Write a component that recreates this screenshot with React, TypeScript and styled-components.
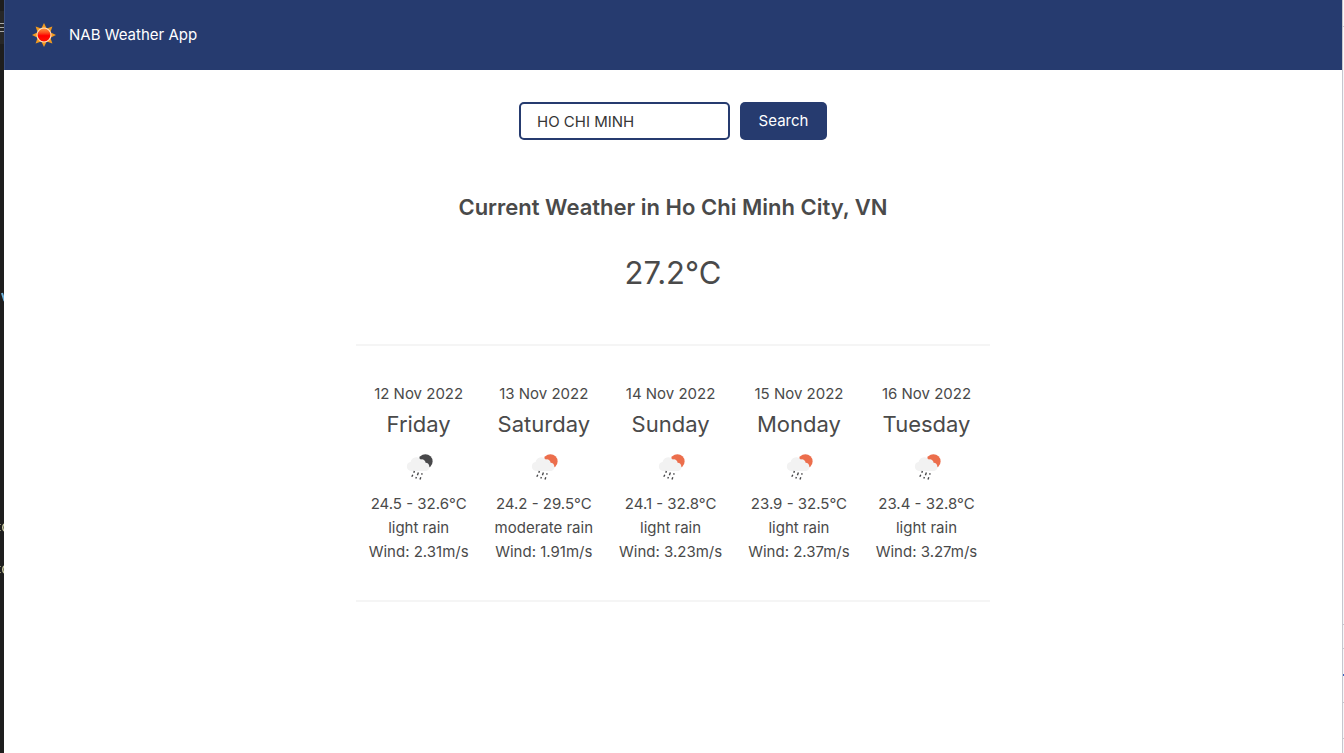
import React, { useState } from "react";
import styled, { createGlobalStyle } from "styled-components";

const NAVY = "#263b6f";

const GlobalStyle = createGlobalStyle`
  *, *::before, *::after { box-sizing: border-box; }
  body {
    margin: 0;
    background: #fff;
    color: #4a4a4a;
    font-family: Inter, "Liberation Sans", sans-serif;
    font-size: 15px;
    line-height: 24px;
  }
  h1, h2, p { margin: 0; font-weight: 400; }
`;

const Screen = styled.div`
  display: flex;
  min-height: 100vh;
`;

const EditorEdge = styled.div`
  flex: none;
  width: 4px;
  overflow: hidden;
  background: #1e1e1e;
  svg { display: block; }
`;

const PanelEdge = styled.div`
  flex: none;
  width: 2px;
  overflow: hidden;
  background: #f6f6f8;
  border-left: 1px solid #c6c6ce;
  svg { display: block; }
`;

const Page = styled.div`
  flex: 1;
  min-width: 0;
`;

const Header = styled.header`
  display: flex;
  align-items: center;
  gap: 13px;
  height: 70px;
  padding: 0 27px;
  border-left: 1px solid #3b4f80;
  background: ${NAVY};
  color: #fff;
`;

const AppName = styled.h1`
  font-size: 15px;
`;

const Main = styled.main`
  display: flex;
  flex-direction: column;
  align-items: center;
  padding: 32px 16px;
`;

const SearchForm = styled.form`
  display: flex;
  gap: 10px;
`;

const CityInput = styled.input`
  width: 211px;
  height: 38px;
  padding: 0 16px;
  border: 2px solid ${NAVY};
  border-radius: 5px;
  background: #fff;
  color: #363636;
  font: inherit;
  outline: none;
`;

const SearchButton = styled.button`
  width: 87px;
  height: 38px;
  padding: 0;
  border: 0;
  border-radius: 5px;
  background: ${NAVY};
  color: #fff;
  font: inherit;
  cursor: pointer;
`;

const Current = styled.section`
  display: flex;
  flex-direction: column;
  gap: 24px;
  padding: 49px 0 47px;
  text-align: center;
`;

const Title = styled.h2`
  font-size: 22px;
  line-height: 36px;
  font-weight: 600;
`;

const Temperature = styled.p`
  font-size: 31px;
  line-height: 48px;
`;

const Forecast = styled.section`
  display: flex;
  justify-content: center;
  padding: 36px 0;
  border-top: 2px solid #f5f5f5;
  border-bottom: 2px solid #f5f5f5;
`;

const Day = styled.article`
  display: flex;
  flex-direction: column;
  align-items: center;
  padding: 0 13px;
  white-space: nowrap;
`;

const DayName = styled.p`
  font-size: 22px;
  line-height: 36px;
`;

const SunLogo = () => (
  <svg width="24" height="24" viewBox="0 0 24 24" aria-hidden="true">
    <defs>
      <linearGradient id="sunFace" x1="0" y1="0" x2="0" y2="1">
        <stop offset="0" stopColor="#ff9a40" />
        <stop offset="0.35" stopColor="#fb4a1c" />
        <stop offset="0.55" stopColor="#ff0000" />
        <stop offset="1" stopColor="#fb1500" />
      </linearGradient>
    </defs>
    <path
      d="M12 0 L14.7 5.6 L20.4 3.6 L18.4 9.3 L24 12 L18.4 14.7 L20.4 20.4 L14.7 18.4 L12 24 L9.3 18.4 L3.6 20.4 L5.6 14.7 L0 12 L5.6 9.3 L3.6 3.6 L9.3 5.6 Z"
      fill="#f29a1f"
    />
    <circle cx="12" cy="12" r="7" fill="url(#sunFace)" stroke="#ffe0bd" strokeWidth="1.1" />
  </svg>
);

const RainIcon = ({ night }: { night?: boolean }) => (
  <svg width="50" height="50" viewBox="0 0 50 50" aria-hidden="true">
    <circle cx="31.4" cy="19.4" r="7.2" fill={night ? "#48484a" : "#ec6e4c"} />
    <path
      d="M17 29 A4.6 4.6 0 0 1 16.6 19.9 A5.8 5.8 0 0 1 26.8 17.6 A3.6 3.6 0 0 1 31.6 20.8 A4.2 4.2 0 0 1 32.4 29 Z"
      fill="#f2f2f2"
    />
    <g stroke="#48484a" strokeWidth="1.4">
      <path d="M20.4 29 L19.8 30.8 M24.4 30.6 L23.4 33.2 M28.2 31.2 L27.6 32.6 M18.8 32.8 L17.8 34.8 M22.4 35 L21.8 36.6 M26.8 35.2 L26 37.4" />
    </g>
  </svg>
);

interface DayForecast {
  date: string;
  name: string;
  range: string;
  summary: string;
  wind: string;
  night?: boolean;
}

const DAYS: DayForecast[] = [
  { date: "12 Nov 2022", name: "Friday", range: "24.5 - 32.6°C", summary: "light rain", wind: "2.31", night: true },
  { date: "13 Nov 2022", name: "Saturday", range: "24.2 - 29.5°C", summary: "moderate rain", wind: "1.91" },
  { date: "14 Nov 2022", name: "Sunday", range: "24.1 - 32.8°C", summary: "light rain", wind: "3.23" },
  { date: "15 Nov 2022", name: "Monday", range: "23.9 - 32.5°C", summary: "light rain", wind: "2.37" },
  { date: "16 Nov 2022", name: "Tuesday", range: "23.4 - 32.8°C", summary: "light rain", wind: "3.27" },
];

export default function App() {
  const [city, setCity] = useState("HO CHI MINH");

  return (
    <Screen>
      <GlobalStyle />
      <EditorEdge>
        <svg width="4" height="600" viewBox="0 0 4 600" aria-hidden="true">
          <rect y="11" width="4" height="33" fill="#272727" />
          <path d="M0 23.5h4M0 27.5h4M0 31.5h4" stroke="#a8a8a8" />
          <path d="M2 293 L4.500 301" stroke="#6fb3dd" strokeWidth="2" />
          <path d="M4 524 Q1.5 527.500 4 531 M4 566 Q1.5 569.500 4 573" stroke="#c9c9a2" strokeWidth="1.5" fill="none" />
          <path d="M0 524.500h1M0 530.500h1M0 566.500h1M0 572.500h1" stroke="#8f8f74" />
        </svg>
      </EditorEdge>
      <Page>
        <Header>
          <SunLogo />
          <AppName>NAB Weather App</AppName>
        </Header>
        <Main>
          <SearchForm onSubmit={(e) => e.preventDefault()}>
            <CityInput aria-label="City" value={city} onChange={(e) => setCity(e.target.value)} />
            <SearchButton type="submit">Search</SearchButton>
          </SearchForm>
          <Current>
            <Title>Current Weather in Ho Chi Minh City, VN</Title>
            <Temperature>27.2°C</Temperature>
          </Current>
          <Forecast>
            {DAYS.map((day) => (
              <Day key={day.date}>
                <p>{day.date}</p>
                <DayName>{day.name}</DayName>
                <RainIcon night={day.night} />
                <p>{day.range}</p>
                <p>{day.summary}</p>
                <p>Wind: {day.wind}m/s</p>
              </Day>
            ))}
          </Forecast>
        </Main>
      </Page>
      <PanelEdge>
        <svg width="1" height="753" viewBox="0 0 1 753" aria-hidden="true">
          <path d="M0 26.500h1M0 624.500h1M0 648.500h1M0 702.500h1M0 738.500h1" stroke="#c6c6ce" />
          <rect y="674" width="1" height="2" fill="#3a66c4" />
        </svg>
      </PanelEdge>
    </Screen>
  );
}
